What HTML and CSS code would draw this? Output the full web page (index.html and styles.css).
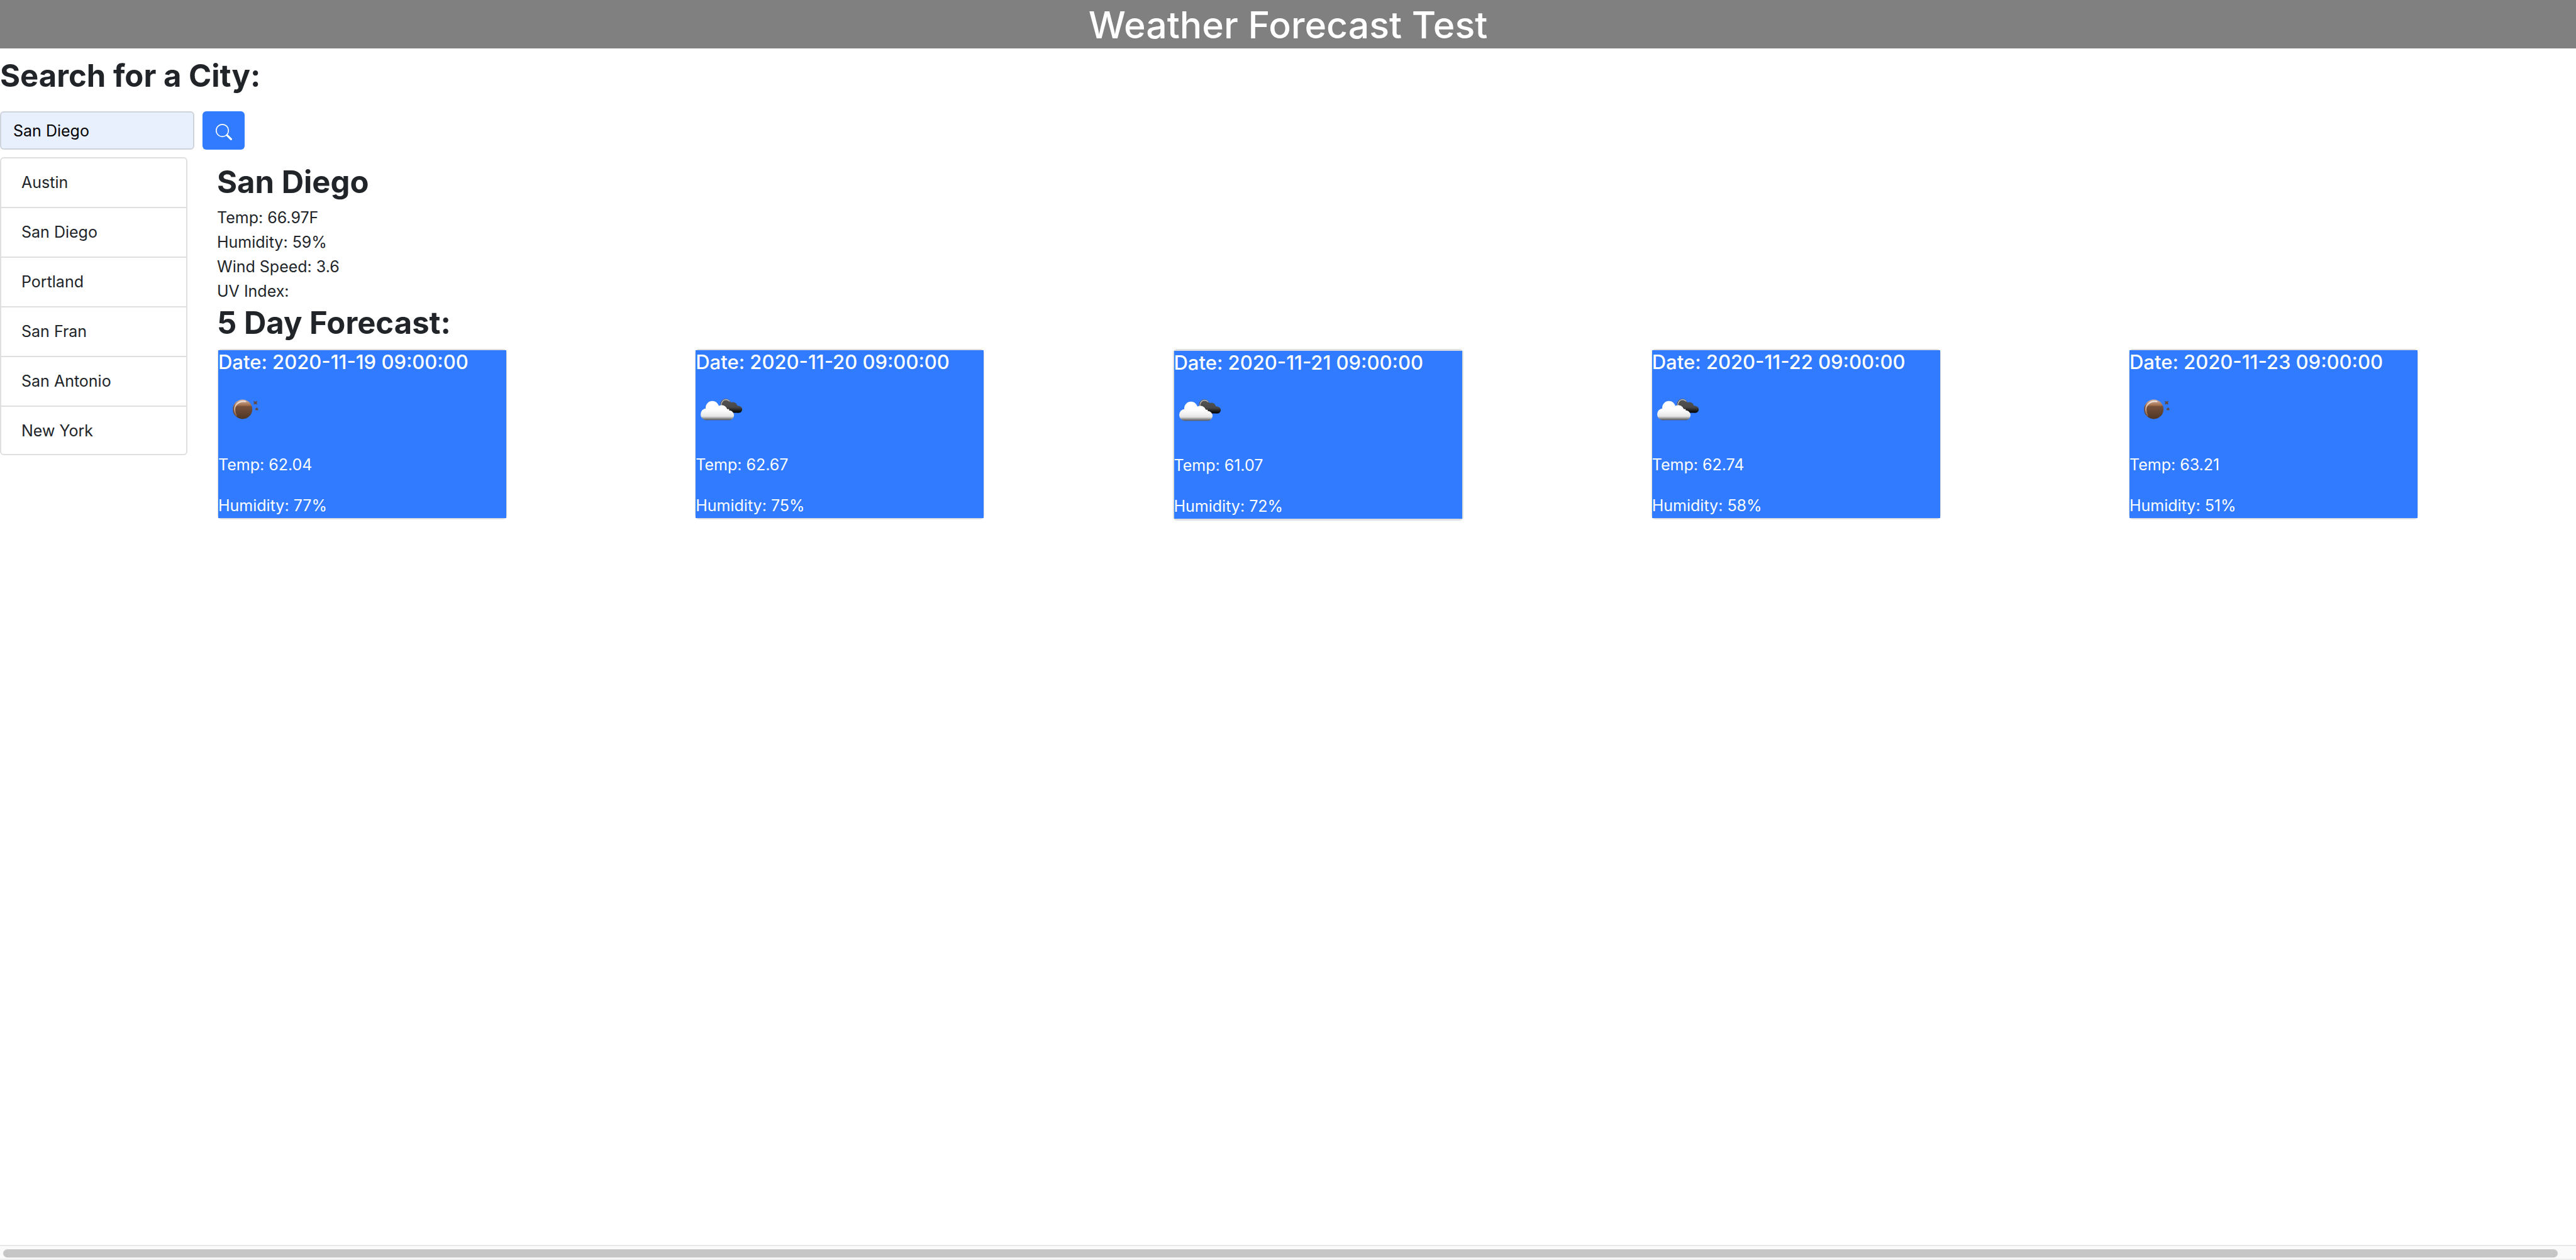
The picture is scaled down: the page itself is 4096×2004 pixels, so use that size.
FILE: index.html
```html
<!DOCTYPE html>
<html lang="en">
<head>
<meta charset="utf-8">
<title>Weather Forecast Test</title>
<link rel="stylesheet" href="styles.css">
</head>
<body>
<svg class="defs" aria-hidden="true">
  <defs>
    <linearGradient id="white" gradientUnits="userSpaceOnUse" x1="0" y1="112" x2="0" y2="226">
      <stop offset="0" stop-color="#fff"/><stop offset=".5" stop-color="#fcfcfc"/><stop offset=".8" stop-color="#e4e4e4"/><stop offset=".9" stop-color="#999"/><stop offset="1" stop-color="#555"/>
    </linearGradient>
    <linearGradient id="dark" gradientUnits="userSpaceOnUse" x1="0" y1="98" x2="0" y2="182">
      <stop offset="0" stop-color="#555"/><stop offset=".6" stop-color="#484848"/><stop offset=".85" stop-color="#1a1a1a"/><stop offset="1" stop-color="#000"/>
    </linearGradient>
    <linearGradient id="bronze" x1="0" y1="0" x2="0" y2="1">
      <stop offset="0" stop-color="#d8b7a4"/><stop offset=".3" stop-color="#a06e4c"/><stop offset=".36" stop-color="#75503a"/><stop offset="1" stop-color="#4e3624"/>
    </linearGradient>
    <linearGradient id="shine" x1="0" y1="0" x2="0" y2="1">
      <stop offset="0" stop-color="#f0e2da"/><stop offset=".5" stop-color="#d0a890"/><stop offset="1" stop-color="#8a5f47"/>
    </linearGradient>
    <symbol id="clouds" viewBox="0 0 300 300">
      <g fill="url(#dark)">
        <circle cx="180" cy="130" r="32"/><circle cx="222" cy="146" r="28"/><circle cx="258" cy="162" r="20"/><rect x="150" y="140" width="108" height="42"/>
      </g>
      <path d="M153 134Q158 104 181 103Q194 104 202 113" fill="none" stroke="#b8b8b8" stroke-width="5" stroke-linecap="round"/>
      <g fill="url(#white)">
        <circle cx="100" cy="152" r="40"/><circle cx="156" cy="170" r="34"/><circle cx="200" cy="197" r="29"/><circle cx="65" cy="191" r="35"/><rect x="62" y="160" width="138" height="66"/>
      </g>
    </symbol>
    <symbol id="sun" viewBox="0 0 300 300">
      <circle cx="145" cy="161" r="58" fill="url(#bronze)"/>
      <path d="M107 198Q87 160 108 133Q128 110 163 115" fill="none" stroke="url(#shine)" stroke-width="8" stroke-linecap="round"/>
      <path d="M209 112L221 115L234 112L229 121L232 132L221 129L211 132L214 121Z" fill="#65483f"/>
      <path d="M219 158L226 155L231 149L234 156L241 158L236 162L237 168L229 166L221 168L224 162Z" fill="#65483f"/>
    </symbol>
  </defs>
</svg>

<header class="banner"><h1 class="banner-title">Weather Forecast Test</h1></header>

<div class="search">
  <h2 class="heading"><label for="city">Search for a City:</label></h2>
  <form class="search-form">
    <input class="search-input" id="city" type="text" value="San Diego">
    <button class="search-button" type="button" aria-label="Search">
      <svg class="search-icon" viewBox="0 0 16 16" fill="currentColor"><path d="M10.442 10.442a1 1 0 0 1 1.415 0l3.85 3.85a1 1 0 0 1-1.414 1.415l-3.85-3.85a1 1 0 0 1 0-1.415z"/><path fill-rule="evenodd" d="M6.5 12a5.5 5.5 0 1 0 0-11 5.5 5.5 0 0 0 0 11zM13 6.5a6.5 6.5 0 1 1-13 0 6.5 6.5 0 0 1 13 0z"/></svg>
    </button>
  </form>
</div>

<div class="content">
  <ul class="history">
    <li>Austin</li>
    <li>San Diego</li>
    <li>Portland</li>
    <li>San Fran</li>
    <li>San Antonio</li>
    <li>New York</li>
  </ul>
  <main class="weather">
    <h2 class="heading">San Diego</h2>
    <div class="current">
      <p>Temp: 66.97F</p>
      <p>Humidity: 59%</p>
      <p>Wind Speed: 3.6</p>
      <p>UV Index:</p>
    </div>
    <h2 class="heading">5 Day Forecast:</h2>
    <div class="forecast">
      <article class="card">
        <div class="card-body">
          <h3>Date: 2020-11-19 09:00:00</h3>
          <svg class="weather-icon"><use href="#sun"/></svg>
          <p>Temp: 62.04</p>
          <p>Humidity: 77%</p>
        </div>
      </article>
      <article class="card">
        <div class="card-body">
          <h3>Date: 2020-11-20 09:00:00</h3>
          <svg class="weather-icon"><use href="#clouds"/></svg>
          <p>Temp: 62.67</p>
          <p>Humidity: 75%</p>
        </div>
      </article>
      <article class="card card-framed">
        <div class="card-body">
          <h3>Date: 2020-11-21 09:00:00</h3>
          <svg class="weather-icon"><use href="#clouds"/></svg>
          <p>Temp: 61.07</p>
          <p>Humidity: 72%</p>
        </div>
      </article>
      <article class="card">
        <div class="card-body">
          <h3>Date: 2020-11-22 09:00:00</h3>
          <svg class="weather-icon"><use href="#clouds"/></svg>
          <p>Temp: 62.74</p>
          <p>Humidity: 58%</p>
        </div>
      </article>
      <article class="card">
        <div class="card-body">
          <h3>Date: 2020-11-23 09:00:00</h3>
          <svg class="weather-icon"><use href="#sun"/></svg>
          <p>Temp: 63.21</p>
          <p>Humidity: 51%</p>
        </div>
      </article>
    </div>
  </main>
</div>

<div class="scroll-track"><div class="scroll-thumb"></div></div>
</body>
</html>
```
FILE: styles.css
```css
* { box-sizing: border-box; }

body {
  margin: 0;
  min-height: 100vh;
  display: flex;
  flex-direction: column;
  background: #fff;
  color: #212529;
  font: 400 25px/39px Inter, "Liberation Sans", sans-serif;
}

h1, h2, h3, p, ul { margin: 0; padding: 0; }

.defs { position: absolute; width: 0; height: 0; }

.banner { background: #808080; color: #fff; text-align: center; }
.banner-title { padding-top: 2px; font-size: 59px; line-height: 75px; font-weight: 500; }

.heading { font-size: 49px; line-height: 62px; font-weight: 700; }

.search { padding-top: 13px; }
.search-form { display: flex; gap: 13px; margin-top: 25px; }
.search-input {
  width: 309px;
  height: 61px;
  padding: 0 19px;
  border: 2px solid #ced4da;
  border-radius: 6px;
  background: #e8effd;
  color: #000;
  font: inherit;
}
.search-button {
  width: 67px;
  height: 61px;
  display: flex;
  justify-content: center;
  align-items: center;
  padding: 5px 0 0;
  border: 0;
  border-radius: 6px;
  background: #307bff;
  color: #fff;
}
.search-icon { width: 26px; height: 26px; }

.content {
  display: flex;
  align-items: flex-start;
  gap: 47px;
  padding-top: 12px;
  flex: 1;
}

.history {
  width: 298px;
  list-style: none;
  border: 2px solid #dfdfdf;
  border-radius: 6px;
}
.history li { height: 79px; padding: 19px 32px; }
.history li + li { border-top: 2px solid #dfdfdf; }
.history li:first-child, .history li:last-child { height: 77px; }

.weather { flex: 1; padding-top: 9px; }
.current { padding-top: 6px; }

.forecast {
  display: flex;
  justify-content: space-between;
  align-items: flex-start;
  margin-top: 10px;
  padding: 0 251px 0 1px;
}
.card {
  width: 460px;
  border: 2px solid #dfdfdf;
  border-left-width: 1px;
  border-right-width: 1px;
  border-radius: 6px;
}
.card-framed { border-width: 3px 2px; width: 462px; }
.card-body { background: #307bff; color: #fff; }
.card h3 { font-size: 31px; line-height: 38px; font-weight: 500; }
.card p + p { margin-top: 26px; }
.weather-icon { display: block; width: 80px; height: 80px; margin: 13px 0 32px; }

.scroll-track {
  padding: 5px 29px 2px 5px;
  border-top: 2px solid #e8e8e8;
  border-bottom: 2px solid #ececec;
  background: #fafafa;
}
.scroll-thumb { height: 13px; border-radius: 7px; background: #c6c6c6; }
```
